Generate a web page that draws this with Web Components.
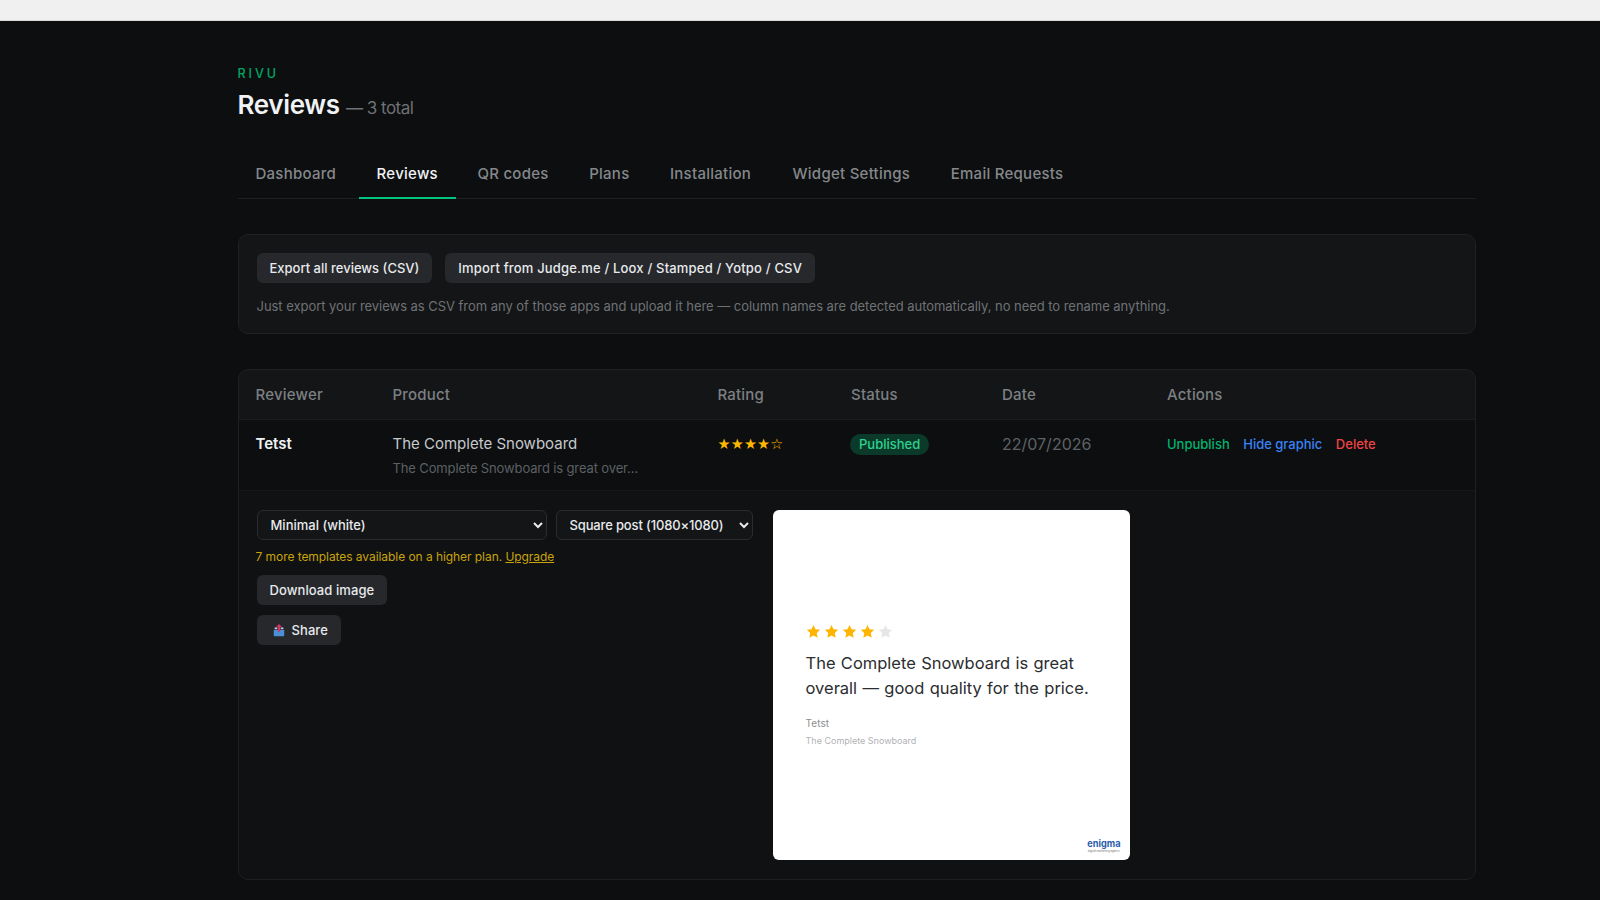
<!DOCTYPE html>
<html lang="en">
<head>
<meta charset="utf-8">
<title>Rivu - Reviews</title>
<style>
  html, body { margin: 0; background: #0c0e10; }
  body { font-family: Inter, "Liberation Sans", sans-serif; color: #e8eaed; overflow: hidden; height: 900px; }
</style>
</head>
<body>
<rv-app></rv-app>

<script>
// Small helper so every element below reads the same way.
const define = (name, html) => {
  const template = document.createElement('template')
  template.innerHTML = html
  customElements.define(name, class extends HTMLElement {
    constructor () {
      super()
      this.attachShadow({ mode: 'open' }).appendChild(template.content.cloneNode(true))
    }
  })
}

const STAR = 'M12 1.5l3.2 6.9 7.5.9-5.5 5.2 1.4 7.5L12 18.4l-6.6 3.6 1.4-7.5L1.3 9.3l7.5-.9z'

define('rv-button', `
  <style>
    :host { display: inline-flex; }
    button {
      display: inline-flex; align-items: center; gap: 6px;
      height: 30px; padding: 0 13px; border: 0; border-radius: 6px;
      background: #26282b; color: #e8eaed;
      font: 500 13px/1 Inter, "Liberation Sans", sans-serif;
      letter-spacing: var(--spacing, 0);
      white-space: nowrap;
    }
  </style>
  <button><slot></slot></button>
`)

define('rv-header', `
  <style>
    :host { display: block; padding-top: 46px; }
    .brand { font-size: 12.5px; line-height: 13px; font-weight: 500; letter-spacing: 3px; color: #00a862; }
    h1 { margin: 8px 0 0; font-size: 26px; line-height: 34px; font-weight: 600; letter-spacing: -0.35px; color: #f0f2f4; }
    small { font-size: 17px; font-weight: 400; letter-spacing: -0.5px; color: #6f7275; }
  </style>
  <div class="brand">RIVU</div>
  <h1>Reviews <small>— 3 total</small></h1>
`)

define('rv-tabs', `
  <style>
    :host { display: flex; margin-top: 24px; height: 49px; border-bottom: 1px solid #1e2023; }
    a {
      display: block; padding: 0 18px; height: 50px; line-height: 49px; box-sizing: border-box;
      font-size: 15px; font-weight: 500; letter-spacing: 0.26px; color: #85888b; white-space: nowrap;
    }
    a:first-child { padding-left: 17px; }
    a + a { margin-left: 4.5px; }
    a.on { color: #f0f2f4; border-bottom: 2px solid #00c47d; margin-right: -1px; }
    a.wide { margin-right: 1px; }
  </style>
  <a>Dashboard</a><a class="on">Reviews</a><a>QR codes</a><a>Plans</a><a class="wide">Installation</a><a>Widget Settings</a><a>Email Requests</a>
`)

define('rv-card', `
  <style>
    :host { display: block; border: 1px solid #1e2023; border-radius: 10px; background: #131517; overflow: hidden; }
  </style>
  <slot></slot>
`)

define('rv-export-panel', `
  <style>
    :host { display: block; margin-top: 35px; }
    .body { padding: 18px; height: 62px; }
    .row { display: flex; gap: 13px; }
    .wide { --spacing: 0.18px; }
    p { margin: 15px 0 0; font-size: 13px; line-height: 16px; letter-spacing: -0.04px; color: #6f7275; white-space: nowrap; }
  </style>
  <rv-card>
    <div class="body">
      <div class="row">
        <rv-button>Export all reviews (CSV)</rv-button>
        <rv-button class="wide">Import from Judge.me / Loox / Stamped / Yotpo / CSV</rv-button>
      </div>
      <p>Just export your reviews as CSV from any of those apps and upload it here — column names are detected automatically, no need to rename anything.</p>
    </div>
  </rv-card>
`)

define('rv-badge', `
  <style>
    :host {
      display: inline-block; margin-left: -1px; padding: 0 9px; height: 21px; line-height: 21px; border-radius: 11px;
      background: #0b3a2a; color: #2fd18f; font-size: 13px; font-weight: 500;
    }
  </style>
  <slot></slot>
`)

define('rv-review-row', `
  <style>
    :host { display: block; }
    .cols { display: grid; grid-template-columns: 137px 325px 133.5px 151px 165px 1fr; padding: 0 17px; }
    .head { height: 49px; align-items: center; border-bottom: 1px solid #1a1c1f; font-size: 15px; font-weight: 500; letter-spacing: 0.2px; color: #7d8083; }
    .row { height: 71px; padding-top: 14px; box-sizing: border-box; background: #0c0e10; font-size: 15px; border-bottom: 1px solid #15171a; }
    .cell { line-height: 20px; }
    .name { font-weight: 600; color: #f0f2f4; }
    .product { color: #c6c9cc; }
    .snip { margin-top: 5px; font-size: 13px; line-height: 18px; letter-spacing: -0.13px; color: #5d6063; }
    .stars { font-size: 14.5px; letter-spacing: 0.2px; color: #ffb800; font-family: "DejaVu Sans", sans-serif; }
    .date { color: #5f6265; font-size: 16px; }
    .actions { display: flex; gap: 13.5px; font-size: 13px; font-weight: 500; }
    .g { color: #00b46e; } .b { color: #3b82f6; } .r { color: #ef4444; }
  </style>
  <div class="cols head">
    <div>Reviewer</div><div>Product</div><div>Rating</div><div>Status</div><div>Date</div><div>Actions</div>
  </div>
  <div class="cols row">
    <div class="cell name">Tetst</div>
    <div class="cell">
      <div class="product">The Complete Snowboard</div>
      <div class="snip">The Complete Snowboard is great over…</div>
    </div>
    <div class="cell stars">★★★★☆</div>
    <div class="cell"><rv-badge>Published</rv-badge></div>
    <div class="cell date">22/07/2026</div>
    <div class="cell actions"><span class="g">Unpublish</span><span class="b">Hide graphic</span><span class="r">Delete</span></div>
  </div>
`)

define('rv-graphic-preview', `
  <style>
    :host {
      display: block; position: relative;
      width: 357px; height: 350px; box-sizing: border-box; padding: 114px 33px 0;
      background: #fff; border-radius: 6px; color: #2b2d30;
    }
    .stars { display: flex; gap: 3px; }
    svg { width: 15px; height: 15px; display: block; }
    .quote { margin: 11.5px 0 0; font-size: 16.5px; line-height: 25.5px; word-spacing: 0.7px; }
    .who { margin-top: 15px; font-size: 10px; line-height: 13px; letter-spacing: 0.1px; color: #8b8d90; }
    .what { margin-top: 5px; font-size: 9px; line-height: 11px; color: #b0b2b5; }
    .logo { position: absolute; right: 9px; bottom: 7px; text-align: center; line-height: 1; }
    .logo b { display: block; font-size: 9.2px; font-weight: 700; color: #2a5caa; }
    .logo i { display: block; margin-top: 2px; font-style: normal; font-size: 2.8px; color: #777; }
  </style>
  <div class="stars">
    <svg viewBox="0 0 24 24"><path fill="#ffb400" d="${STAR}"/></svg>
    <svg viewBox="0 0 24 24"><path fill="#ffb400" d="${STAR}"/></svg>
    <svg viewBox="0 0 24 24"><path fill="#ffb400" d="${STAR}"/></svg>
    <svg viewBox="0 0 24 24"><path fill="#ffb400" d="${STAR}"/></svg>
    <svg viewBox="0 0 24 24"><path fill="#e6e6e6" d="${STAR}"/></svg>
  </div>
  <p class="quote">The Complete Snowboard is great overall — good quality for the price.</p>
  <div class="who">Tetst</div>
  <div class="what">The Complete Snowboard</div>
  <div class="logo"><b>enigma</b><i>digital marketing agency</i></div>
`)

define('rv-graphic-panel', `
  <style>
    :host { display: flex; gap: 19px; padding: 19px 18px; background: #0f1113; height: 350px; }
    .controls { width: 497px; }
    .selects { display: flex; gap: 9px; }
    select {
      height: 30px; box-sizing: border-box; padding: 0 4px 0 9px; border: 1px solid #2a2c2f; border-radius: 6px;
      background: #131517; color: #e8eaed; color-scheme: dark;
      font: 500 13px Inter, "Liberation Sans", sans-serif;
    }
    .template { width: 290px; }
    .format { width: 197px; letter-spacing: -0.15px; }
    .note { margin: 9px 0 0 -1px; font-size: 12px; line-height: 16px; letter-spacing: -0.06px; color: #c9a30a; }
    .note a { color: inherit; text-decoration: underline; }
    .buttons { display: flex; flex-direction: column; align-items: flex-start; gap: 10px; margin-top: 10px; --spacing: 0.08px; }
    svg { width: 14px; height: 14px; display: block; }
  </style>
  <div class="controls">
    <div class="selects">
      <select class="template"><option>Minimal (white)</option></select>
      <select class="format"><option>Square post (1080×1080)</option></select>
    </div>
    <p class="note">7 more templates available on a higher plan. <a>Upgrade</a></p>
    <div class="buttons">
      <rv-button>Download image</rv-button>
      <rv-button>
        <svg viewBox="0 0 16 16" style="margin:0 0 0 2px">
          <path fill="#b9d3ea" d="M3 5h3v2H3z M10 5h3v2h-3z"/>
          <path fill="#4a90d9" d="M2 8h12v6a1 1 0 0 1-1 1H3a1 1 0 0 1-1-1z"/>
          <path fill="#d6336c" d="M8 1l3.4 3.6H9.3V10H6.7V4.6H4.6z"/>
        </svg>
        Share
      </rv-button>
    </div>
  </div>
  <rv-graphic-preview></rv-graphic-preview>
`)

define('rv-app', `
  <style>
    :host { display: block; }
    .chrome { height: 20px; background: #f0f0f0; border-bottom: 1px solid #d8d8d8; }
    main { width: 1238px; margin-left: 237.5px; }
    .table { display: block; margin-top: 35px; }
  </style>
  <div class="chrome"></div>
  <main>
    <rv-header></rv-header>
    <rv-tabs></rv-tabs>
    <rv-export-panel></rv-export-panel>
    <rv-card class="table">
      <rv-review-row></rv-review-row>
      <rv-graphic-panel></rv-graphic-panel>
    </rv-card>
  </main>
`)
</script>
</body>
</html>
